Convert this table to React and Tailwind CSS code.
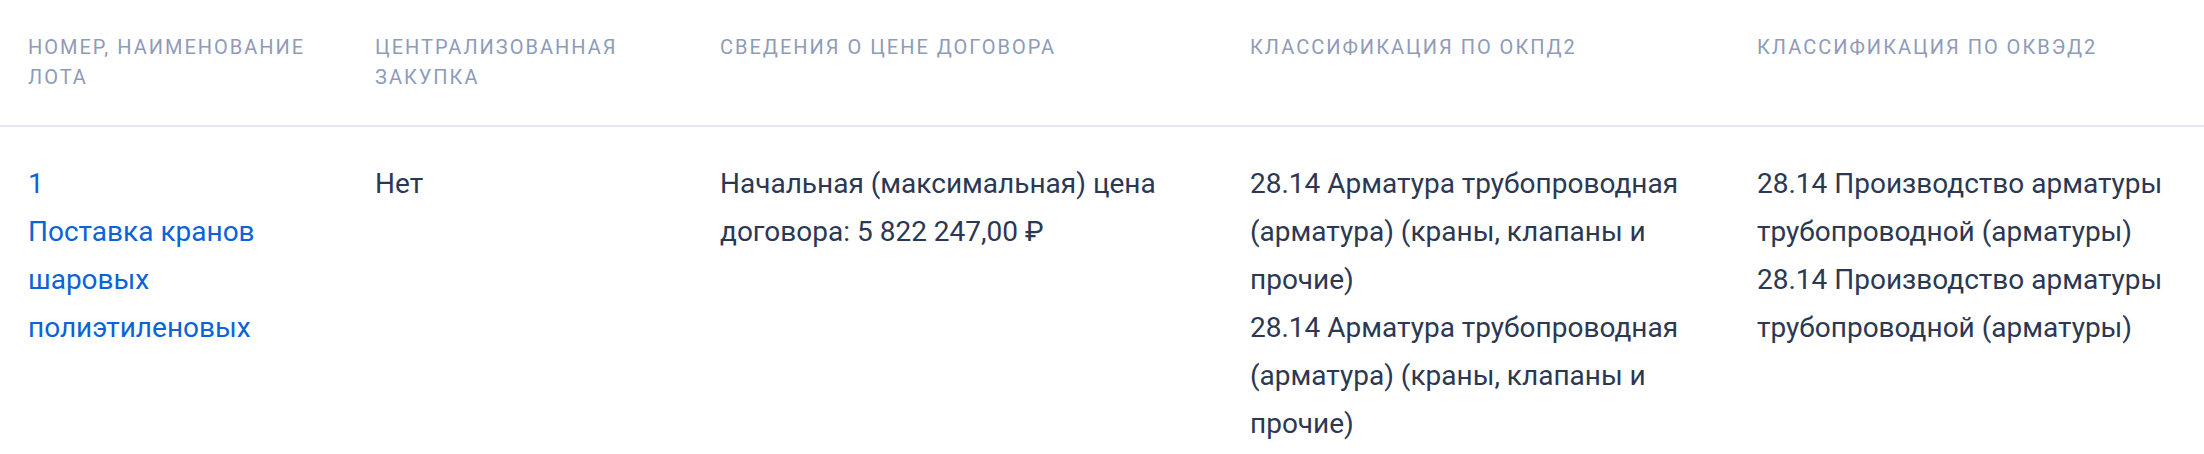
export default function App() {
  const cols = "grid grid-cols-[347px_345px_530px_507px_1fr]";
  const head = "pl-[28px] pr-[20px] pt-[32px] pb-[33px] text-[20px] leading-[30px] tracking-[2px] uppercase text-[#8e9bb9]";
  const base = "pl-[28px] pr-[28px] pt-[33px] pb-[10px] text-[28px] leading-[48px]";
  const cell = `${base} text-[#2b3853]`;
  return (
    <div className="w-[2204px] h-[454px] bg-white overflow-hidden" style={{ fontFamily: "Roboto, 'Noto Sans', sans-serif" }}>
      <div className={`${cols} border-b-2 border-[#e4e8f2]`}>
        <div className={head}>Номер, наименование лота</div>
        <div className={head}>Централизованная закупка</div>
        <div className={head}>Сведения о цене договора</div>
        <div className={head}>Классификация по ОКПД2</div>
        <div className={head}>Классификация по ОКВЭД2</div>
      </div>
      <div className={cols}>
        <div className={`${base} text-[#0a63d8]`}>
          <div>1</div>
          <div>Поставка кранов шаровых полиэтиленовых</div>
        </div>
        <div className={cell}>Нет</div>
        <div className={cell}>Начальная (максимальная) цена договора: 5 822 247,00 ₽</div>
        <div className={cell}>
          <div>28.14 Арматура трубопроводная (арматура) (краны, клапаны и прочие)</div>
          <div>28.14 Арматура трубопроводная (арматура) (краны, клапаны и прочие)</div>
        </div>
        <div className="pl-[28px] pr-[10px] pt-[33px] pb-[10px] text-[28px] leading-[48px] text-[#2b3853]">
          <div>28.14 Производство арматуры трубопроводной (арматуры)</div>
          <div>28.14 Производство арматуры трубопроводной (арматуры)</div>
        </div>
      </div>
    </div>
  );
}
